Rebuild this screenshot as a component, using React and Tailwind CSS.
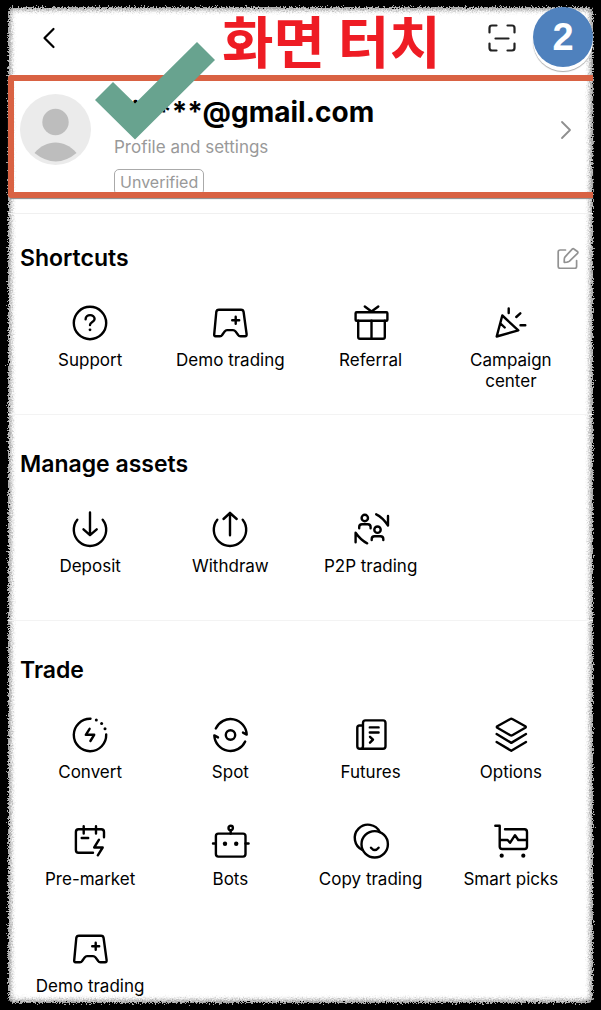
import React from 'react';

const Icon = ({ children }) => (
  <svg
    viewBox="0 0 36 36"
    className="size-9 overflow-visible"
    fill="none"
    stroke="currentColor"
    strokeWidth="2.4"
    strokeLinecap="round"
    strokeLinejoin="round"
    aria-hidden="true"
  >
    {children}
  </svg>
);

const gamepad = (
  <Icon>
    <path d="M7 4.7H29Q31.3 4.7 31.6 7L34.6 29Q34.9 31.3 33 31.3H28.5Q27 31.3 26 29.8L23.5 26.4Q22.5 25.1 21 25.1H15Q13.7 25.1 12.7 26.4L10.3 29.8Q9.3 31.3 8 31.3H3.5Q2 31.3 2.2 29.5L4.3 7Q4.6 4.7 7 4.7Z" />
    <path d="M23.7 11.8v7M20.2 15.3h7" />
  </Icon>
);

const shortcuts = [
  {
    name: 'Support',
    icon: (
      <Icon>
        <circle cx="18" cy="18" r="16.2" />
        <path d="M13.6 14.2C13.6 8.8 22.6 8.8 22.6 14C22.6 17 18 17 18 20" />
        <circle cx="18" cy="24.8" r="1.4" fill="currentColor" stroke="none" />
      </Icon>
    ),
  },
  { name: 'Demo trading', icon: gamepad },
  {
    name: 'Referral',
    icon: (
      <Icon>
        <rect x="2.6" y="7.2" width="31.8" height="8.6" rx="1" />
        <path d="M5.2 15.8V32Q5.2 33.8 7 33.8H30Q31.8 33.8 31.8 32V15.8M18.5 15.8V33.8M11.8 1.5L18.5 6.5L25.3 1.5" />
      </Icon>
    ),
  },
  {
    name: 'Campaign center',
    icon: (
      <Icon>
        <path d="M9.3 10.5L25.3 25.3L3.7 31.5ZM7.5 18.5L11.7 22.5M15.7 3.5V8M23.3 12L27.3 8.3M27.5 20.3H32.3" />
      </Icon>
    ),
  },
];

const assets = [
  {
    name: 'Deposit',
    icon: (
      <Icon>
        <path d="M5.3 8.7A16.2 16.2 0 1 0 30.7 8.7M18 1.5V24M11.5 18.3L18 24.2L24.7 18.3" />
      </Icon>
    ),
  },
  {
    name: 'Withdraw',
    icon: (
      <Icon>
        <path d="M5.3 8.7A16.2 16.2 0 1 0 30.7 8.7M18 24.3V2M11.5 8L18 2L24.7 8" />
      </Icon>
    ),
  },
  {
    name: 'P2P trading',
    icon: (
      <Icon>
        <circle cx="11.8" cy="7" r="3.2" />
        <path d="M6.2 17.2V16Q6.2 13.2 9 13.2H14.8Q17.6 13.2 17.6 16V17.2" />
        <circle cx="24.5" cy="18.7" r="3.2" />
        <path d="M18.7 29V28Q18.7 25.2 21.5 25.2H27.5Q30.3 25.2 30.3 28V29" />
        <path d="M23.2 3.3Q29.5 6.2 35 14.5V5M2.6 31.3V21.8Q8 29.5 14.2 32.3" />
      </Icon>
    ),
  },
];

const trade = [
  {
    name: 'Convert',
    icon: (
      <Icon>
        <path d="M18.5 1.8A16.2 16.2 0 1 0 34.2 17.5M17.6 11.8L13.8 17.8H22.2L18.4 24" />
        <g fill="currentColor" stroke="none">
          <circle cx="24.3" cy="2.9" r="1.5" />
          <circle cx="29.6" cy="6.4" r="1.5" />
          <circle cx="33" cy="11.7" r="1.5" />
        </g>
      </Icon>
    ),
  },
  {
    name: 'Spot',
    icon: (
      <Icon>
        <circle cx="18.5" cy="18" r="4.7" />
        <path d="M3.8 11.5A16.2 16.2 0 0 1 34.7 17.6L31 15.6M33.2 24.5A16.2 16.2 0 0 1 2.3 18.4L6 20.4" />
      </Icon>
    ),
  },
  {
    name: 'Futures',
    icon: (
      <Icon>
        <path d="M9.8 8.5H6.5Q4.3 8.5 4.3 10.7V29.3Q4.3 31.8 6.8 31.8H30Q32.5 31.8 32.5 29.3V6Q32.5 3.4 30 3.4H12.5Q10 3.4 10 6V29Q10 31.8 7.5 31.8" />
        <path d="M16.8 10.4H25.6M16.8 15.5H25.6M17 19.8L20 22.7L17 25.7" />
      </Icon>
    ),
  },
  {
    name: 'Options',
    icon: (
      <Icon>
        <path d="M19.3 2L32.3 9.3Q33.3 10 32.3 10.7L19.3 18.2Q18.3 18.8 17.3 18.2L4.3 10.7Q3.3 10 4.3 9.3L17.3 2Q18.3 1.4 19.3 2Z" />
        <path d="M3.6 17L18.3 25.9L33 17M3.6 25L18.3 33.8L33 25" />
      </Icon>
    ),
  },
  {
    name: 'Pre-market',
    icon: (
      <Icon>
        <path d="M21 28.7H6.5Q3.9 28.7 3.9 26V8Q3.9 5.2 6.5 5.2H29.3Q32 5.2 32 8V13.3M11.7 2.3V9.5M24 2.3V9.5M9.7 14H16.2M27 15.7L22.2 23.5H30.7L25.8 31.3" />
      </Icon>
    ),
  },
  {
    name: 'Bots',
    icon: (
      <Icon>
        <rect x="3.9" y="9.6" width="29.6" height="23" rx="2.5" />
        <circle cx="18.7" cy="4" r="2.2" />
        <path d="M18.7 6.2V9.6M1 19.5H3.9M33.5 19.5H36.6" />
        <circle cx="13" cy="19.7" r="2.2" fill="currentColor" stroke="none" />
        <circle cx="24.2" cy="19.7" r="2.2" fill="currentColor" stroke="none" />
      </Icon>
    ),
  },
  {
    name: 'Copy trading',
    icon: (
      <Icon>
        <circle cx="21.7" cy="20.3" r="13.2" />
        <path d="M26.8 8A13.2 13.2 0 1 0 9.3 25.8M18 23.7Q21.8 28.3 25.6 23.7" />
      </Icon>
    ),
  },
  {
    name: 'Smart picks',
    icon: (
      <Icon>
        <path d="M2.3 1.8H6.7V22.5Q6.7 25 9.2 25H31.5Q34 25 34 22.5V8Q34 5.3 31.5 5.3H12M6.7 16H14.6L17 18.8L22 11.2L25.3 16H34" />
        <circle cx="8.7" cy="31.7" r="2.1" fill="currentColor" stroke="none" />
        <circle cx="30.3" cy="31.7" r="2.1" fill="currentColor" stroke="none" />
      </Icon>
    ),
  },
  { name: 'Demo trading', icon: gamepad },
];

const Section = ({ title, items, className, action }) => (
  <section className={className}>
    <div className="flex h-7 items-center justify-between">
      <h2 className="text-[23px] font-semibold">{title}</h2>
      {action}
    </div>
    <div className="mt-[33px] grid grid-cols-4 items-start gap-y-[41px]">
      {items.map((item, i) => (
        <button key={i} type="button" className="flex flex-col items-center gap-[9px] px-3 text-[17px] leading-[21px]">
          {item.icon}
          <span>{item.name}</span>
        </button>
      ))}
    </div>
  </section>
);

// torn paper edge behind the whole page
const Frame = () => (
  <>
    <svg className="absolute size-0" aria-hidden="true">
      <filter id="rough" x="-2%" y="-2%" width="104%" height="104%">
        <feTurbulence type="fractalNoise" baseFrequency="0.7" numOctaves="2" result="noise" />
        <feDisplacementMap in="SourceGraphic" in2="noise" scale="7" xChannelSelector="R" yChannelSelector="G" />
      </filter>
    </svg>
    <div className="absolute inset-0 rounded-md bg-white shadow-[inset_0_0_4px_3px_#999999] [filter:url(#rough)]" />
  </>
);

const App = () => {
  return (
    <div className="bg-black px-2 py-[7px] font-['Inter',sans-serif] text-black">
      <main className="relative">
        <Frame />
        <div className="relative">
          <header className="flex h-[68px] items-center justify-between pr-[77px] pb-[6px] pl-8">
            <button type="button" aria-label="Back">
              <svg viewBox="0 0 20 24" className="h-6 w-5" fill="none" stroke="currentColor" strokeWidth="2.2" strokeLinecap="round" strokeLinejoin="round">
                <path d="M13.5 3L4.5 12L13.5 21" />
              </svg>
            </button>
            <button type="button" aria-label="Scan">
              <svg viewBox="0 0 28 28" className="size-7" fill="none" stroke="#222222" strokeWidth="2.2" strokeLinecap="round">
                <path d="M1.5 8.5V4Q1.5 1.5 4 1.5H8.5M19.5 1.5H24Q26.5 1.5 26.5 4V8.5M26.5 19.5V24Q26.5 26.5 24 26.5H19.5M8.5 26.5H4Q1.5 26.5 1.5 24V19.5M7.5 14.5H20.5" />
              </svg>
            </button>
          </header>

          <a href="#profile" className="flex h-[123px] overflow-hidden rounded-l-sm border-y-6 border-l-6 border-[#d96243] pl-[6px] shadow-[0_1px_1px_#888888]">
            <svg viewBox="0 0 71 71" className="mt-[13px] size-[71px] shrink-0" aria-hidden="true">
              <circle cx="35.5" cy="35.5" r="35.5" fill="#ebebeb" />
              <circle cx="35.5" cy="28" r="13.2" fill="#bdbdbd" />
              <path d="M14.5 59C26 45 45 45 56.5 59Q36 76 14.5 59Z" fill="#bdbdbd" />
            </svg>
            <div className="ml-[23px] flex grow flex-col items-start pt-[15px] text-[#999999]">
              <strong className="text-[28px] leading-8 font-bold text-black">div***@gmail.com</strong>
              <span className="mt-[7px] text-[17px] leading-6">Profile and settings</span>
              <span className="mt-[10px] rounded-[5px] border border-[#aaaaaa] px-[5px] text-base leading-6">Unverified</span>
            </div>
            <svg viewBox="0 0 12 20" className="mt-[39px] mr-[21px] h-5 w-3" fill="none" stroke="#8f8f8f" strokeWidth="1.8" strokeLinecap="round" strokeLinejoin="round" aria-hidden="true">
              <path d="M2 2L10 10L2 18" />
            </svg>
          </a>

          <div className="mt-[15px] divide-y divide-[#f3f3f3] border-t border-[#f0f0f0] *:px-3">
            <Section
              title="Shortcuts"
              items={shortcuts}
              className="pt-[30px] pb-[22px]"
              action={
                <button type="button" aria-label="Edit shortcuts" className="mr-[2px]">
                  <svg viewBox="0 0 22 22" className="size-[22px]" fill="none" stroke="#929292" strokeWidth="1.7" strokeLinecap="round" strokeLinejoin="round">
                    <path d="M8.5 3H3.2Q1.2 3 1.2 5V19.5Q1.2 21.3 3.2 21.3H17.8Q19.6 21.3 19.6 19.5V13.5" />
                    <path d="M15.2 2.2Q16.2 1.2 17.2 2.2L20.4 4.5Q21.4 5.4 20.5 6.4L12.5 14.2Q11.5 15.1 10 15.2L7.2 15.3L7.3 12Q7.4 10.6 8.3 9.6Z" />
                  </svg>
                </button>
              }
            />
            <Section title="Manage assets" items={assets} className="pt-[35px] pb-[43px]" />
            <Section title="Trade" items={trade} className="pt-[35px] pb-[6px]" />
          </div>

          <h1 className="absolute top-0 left-[214px] font-['Noto_Sans_CJK_KR',sans-serif] text-[56px] leading-[64px] font-bold whitespace-nowrap text-[#ee1c24]">
            화면 터치
          </h1>
          <svg viewBox="0 0 120 98" className="pointer-events-none absolute top-[35px] left-[87px] w-[120px]" aria-hidden="true">
            <path d="M0 58L18 40L40 61.5L102 0L120 18L40 97.5Z" fill="#68a38f" />
          </svg>
          <span className="absolute top-0 right-0 flex size-[60px] items-center justify-center rounded-full bg-[#4f81bd] font-['Liberation_Sans',sans-serif] text-[38px] font-bold text-white shadow-[0_4px_0_#ffffff,0_5px_1px_#aaaaaa]">
            2
          </span>
        </div>
      </main>
    </div>
  );
};

export default App;
